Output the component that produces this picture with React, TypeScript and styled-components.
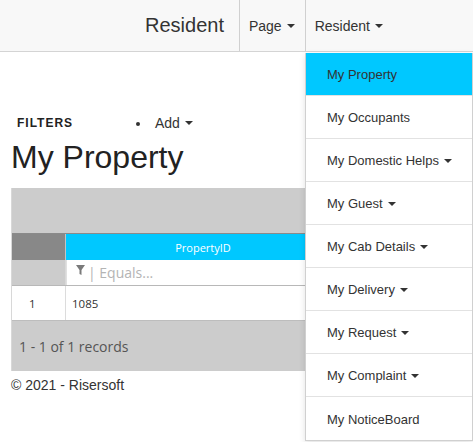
import React from "react";
import styled, { createGlobalStyle } from "styled-components";

const Global = createGlobalStyle`
  html, body { margin: 0; padding: 0; background: #fff; }
  body { font-family: "Liberation Sans", Arial, sans-serif; font-size: 14px; color: #333; }
  * { box-sizing: border-box; }
`;

const BLUE = "#00c8ff";

const Page = styled.div`
  position: relative;
  width: 473px;
  height: 442px;
  overflow: hidden;
`;

const Navbar = styled.div`
  height: 52px;
  background: #f8f8f8;
  border-bottom: 1px solid #d4d4d4;
  display: flex;
  align-items: stretch;
  padding-left: 145px;
`;

const Brand = styled.div`
  font-size: 20px;
  color: #333;
  display: flex;
  align-items: center;
  padding-right: 15px;
`;

const NavItem = styled.div`
  display: flex;
  align-items: center;
  padding: 0 10px 0 9px;
  border-left: 1px solid #d0d0d0;
  font-size: 14px;
  color: #333;
`;

const Caret = styled.span<{ $color?: string }>`
  display: inline-block;
  width: 0;
  height: 0;
  margin-left: 5px;
  border-top: 4px solid ${(p) => p.$color || "#333"};
  border-left: 4px solid transparent;
  border-right: 4px solid transparent;
  vertical-align: middle;
`;

const Main = styled.div`
  padding: 0 11px;
`;

const FilterBar = styled.div`
  margin-top: 61px;
  height: 20px;
  display: flex;
  align-items: center;
  padding-left: 6px;
`;

const FiltersLabel = styled.div`
  font-size: 12px;
  font-weight: bold;
  letter-spacing: 1px;
  color: #222;
  width: 119px;
`;

const Bullet = styled.span`
  width: 4px;
  height: 4px;
  border-radius: 50%;
  background: #333;
  margin-right: 15px;
  margin-top: 2px;
`;

const AddLink = styled.span`
  font-size: 14px;
  color: #333;
  display: flex;
  align-items: center;
`;

const Title = styled.h1`
  margin: 7px 0 0 0;
  font-size: 32px;
  line-height: 35px;
  font-weight: normal;
  color: #222;
`;

const GridWrap = styled.div`
  margin-top: 13px;
  width: 451px;
  border-left: 1px solid #d8d8d8;
  font-family: "Open Sans", "Noto Sans", sans-serif;
`;

const GroupPanel = styled.div`
  height: 46px;
  background: #cccccc;
  border-bottom: 1px solid #8a8a8a;
`;

const Row = styled.div<{ $h: number; $bottom?: string }>`
  display: grid;
  grid-template-columns: 54px 275px 1fr;
  height: ${(p) => p.$h}px;
  border-bottom: ${(p) => (p.$bottom ? `1px solid ${p.$bottom}` : "none")};
`;

const Cell = styled.div<{ $bg: string; $sep?: string; $pad?: number }>`
  background: ${(p) => p.$bg};
  border-right: ${(p) => (p.$sep ? `1px solid ${p.$sep}` : "none")};
  display: flex;
  align-items: center;
  padding-left: ${(p) => p.$pad || 0}px;
`;

const HeadText = styled.span`
  color: #fff;
  font-size: 11px;
  width: 100%;
  text-align: center;
`;

const FilterInput = styled.div`
  flex: 1;
  height: 100%;
  background: #fff;
  margin-left: 1px;
  display: flex;
  align-items: center;
  padding-left: 9px;
  font-size: 14px;
  color: #b4b4b4;
`;

const FilterIcon = styled.svg`
  width: 9px;
  height: 10px;
  margin-right: 3px;
  margin-top: -5px;
`;

const DataText = styled.span`
  font-size: 11.5px;
  color: #333;
`;

const Pager = styled.div`
  height: 51px;
  background: #cccccc;
  border-top: 1px solid #bdbdbd;
  display: flex;
  align-items: center;
  padding-left: 7px;
  font-size: 14px;
  color: #555;
`;

const Footer = styled.div`
  margin-top: 4px;
  line-height: 20px;
  font-size: 14px;
  color: #333;
`;

const Dropdown = styled.div`
  position: absolute;
  left: 305px;
  top: 53px;
  width: 168px;
  background: #fff;
  border: 1px solid #d0d0d0;
  border-top: none;
  box-shadow: 0 2px 6px rgba(0, 0, 0, 0.12);
`;

const MenuItem = styled.div<{ $active?: boolean }>`
  height: 43px;
  display: flex;
  align-items: center;
  padding-left: 21px;
  padding-top: 1px;
  font-size: 13px;
  color: #333;
  background: ${(p) => (p.$active ? BLUE : "#fff")};
  border-bottom: 1px solid #e2e2e2;
  &:last-child { border-bottom: none; }
`;

const menu: { label: string; caret?: boolean }[] = [
  { label: "My Property" },
  { label: "My Occupants" },
  { label: "My Domestic Helps", caret: true },
  { label: "My Guest", caret: true },
  { label: "My Cab Details", caret: true },
  { label: "My Delivery", caret: true },
  { label: "My Request", caret: true },
  { label: "My Complaint", caret: true },
  { label: "My NoticeBoard" },
];

export default function App() {
  return (
    <Page>
      <Global />
      <Navbar>
        <Brand>Resident</Brand>
        <NavItem>
          Page<Caret />
        </NavItem>
        <NavItem>
          Resident<Caret />
        </NavItem>
      </Navbar>
      <Main>
        <FilterBar>
          <FiltersLabel>FILTERS</FiltersLabel>
          <Bullet />
          <AddLink>
            Add<Caret />
          </AddLink>
        </FilterBar>
        <Title>My Property</Title>
        <GridWrap>
          <GroupPanel />
          <Row $h={26}>
            <Cell $bg="#888888" $sep="#c4c4c4" />
            <Cell $bg={BLUE} $sep="#c4c4c4">
              <HeadText>PropertyID</HeadText>
            </Cell>
            <Cell $bg={BLUE} />
          </Row>
          <Row $h={26} $bottom="#b8b8b8">
            <Cell $bg="#cccccc" $sep="#d8d8d8" />
            <Cell $bg="#e0e0e0" $sep="#d8d8d8">
              <FilterInput>
                <FilterIcon viewBox="0 0 9 10">
                  <path d="M0 0 H9 L5.5 5 V10 L3.5 9 V5 Z" fill="#7a7a7a" />
                </FilterIcon>
                | Equals...
              </FilterInput>
            </Cell>
            <Cell $bg="#e0e0e0">
              <FilterInput />
            </Cell>
          </Row>
          <Row $h={34}>
            <Cell $bg="#fff" $sep="#dcdcdc" $pad={17}>
              <DataText>1</DataText>
            </Cell>
            <Cell $bg="#fff" $sep="#dcdcdc" $pad={6}>
              <DataText>1085</DataText>
            </Cell>
            <Cell $bg="#fff" />
          </Row>
          <Pager>1 - 1 of 1 records</Pager>
        </GridWrap>
        <Footer>© 2021 - Risersoft</Footer>
      </Main>
      <Dropdown>
        {menu.map((m, i) => (
          <MenuItem key={m.label} $active={i === 0}>
            {m.label}
            {m.caret && <Caret />}
          </MenuItem>
        ))}
      </Dropdown>
    </Page>
  );
}
